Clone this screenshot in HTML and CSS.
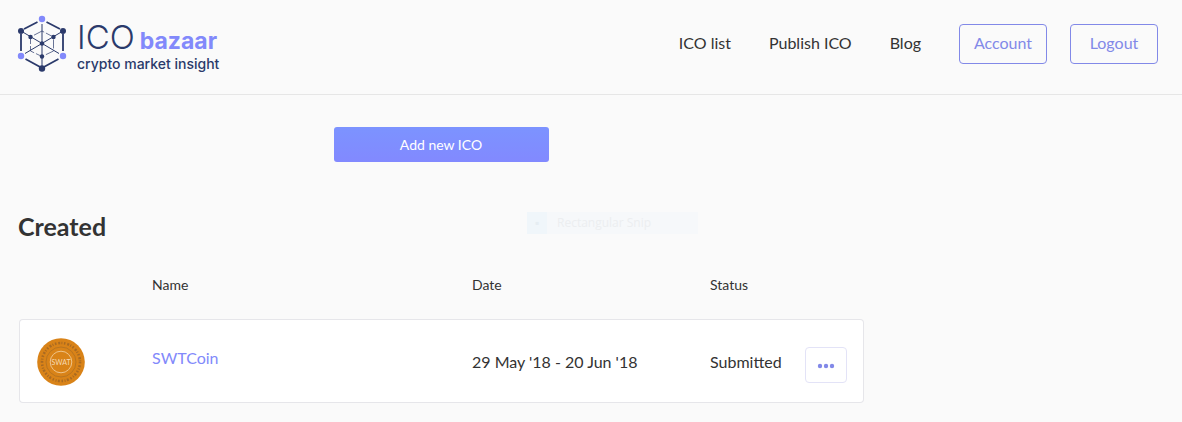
FILE: index.html
```html
<!DOCTYPE html>
<html lang="en">
<head>
<meta charset="utf-8">
<meta name="viewport" content="width=device-width, initial-scale=1">
<title>ICObazaar</title>
<link rel="stylesheet" href="styles.css">
</head>
<body>
<header class="site-header">
  <a class="logo" href="#" aria-label="ICObazaar home">
    <svg class="logo-mark" width="50" height="58" viewBox="0 0 50 58" aria-hidden="true">
      <g fill="none" stroke="#2b3a6b" stroke-width="1.8">
        <path d="M29.500 7 43 14M20.500 7 7 14M4 19v17M46 19v17M8.500 44l16.500 9 16.500-9"/>
      </g>
      <g fill="none" stroke="#2b3a6b" stroke-width="1">
        <path d="M25 9v44M4 16l38 22.500M46 16 8 38.500"/>
        <path d="M25 16 13.500 22v14L25 41.500 36.500 36V22z" stroke-opacity=".7" stroke-dasharray="9 2"/>
      </g>
      <g fill="#2b3a6b">
        <circle cx="4" cy="16" r="3"/><circle cx="46" cy="16" r="3"/><circle cx="25" cy="53.500" r="3.200"/>
        <circle cx="13.500" cy="22" r="2.200"/><circle cx="36.500" cy="22" r="2.200"/><circle cx="25" cy="28.500" r="2.200"/><circle cx="25" cy="41.500" r="2.200"/>
      </g>
      <g fill="#8289fb"><circle cx="25" cy="4" r="3.200"/><circle cx="4" cy="41" r="3.200"/><circle cx="46" cy="41" r="3.200"/></g>
    </svg>
    <span class="logo-text">
      <span class="logo-name"><span class="logo-ico">ICO</span><span class="logo-bazaar">bazaar</span></span>
      <span class="logo-tagline">crypto market insight</span>
    </span>
  </a>
  <nav class="nav">
    <a class="nav-link" href="#">ICO list</a>
    <a class="nav-link" href="#">Publish ICO</a>
    <a class="nav-link" href="#">Blog</a>
    <span class="nav-actions">
      <button class="outline-button" type="button">Account</button>
      <button class="outline-button" type="button">Logout</button>
    </span>
  </nav>
</header>
<main class="content">
  <button class="add-button" type="button">Add new ICO</button>
  <h1 class="section-title">Created</h1>
  <table class="ico-table">
    <thead>
      <tr><th class="col-logo"></th><th class="col-name">Name</th><th class="col-date">Date</th><th class="col-status">Status</th><th></th></tr>
    </thead>
    <tbody>
      <tr>
        <td class="coin-cell">
          <svg class="coin" width="48" height="48" viewBox="0 0 48 48" role="img" aria-label="SWAT coin">
            <circle cx="24" cy="24" r="23.800" fill="#d98318"/>
            <circle cx="24" cy="24" r="19" fill="none" stroke="#a96a22" stroke-width="2.600" stroke-dasharray="1.500 1.800 2 1.300 1 1.600"/>
            <circle cx="24" cy="24" r="15" fill="none" stroke="#b87420" stroke-width="1"/>
            <circle cx="24" cy="24" r="10.800" fill="none" stroke="#efc48a" stroke-width="1"/>
            <text class="coin-text" x="24" y="26.500" text-anchor="middle">SWAT</text>
          </svg>
        </td>
        <td><a class="coin-link" href="#">SWTCoin</a></td>
        <td>29 May '18 - 20 Jun '18</td>
        <td>Submitted</td>
        <td class="menu-cell">
          <button class="menu-button" type="button" aria-label="More actions">
            <svg width="18" height="6" viewBox="0 0 18 6" aria-hidden="true" fill="#8289e8"><circle cx="3" cy="3" r="2.200"/><circle cx="9" cy="3" r="2.200"/><circle cx="15" cy="3" r="2.200"/></svg>
          </button>
        </td>
      </tr>
    </tbody>
  </table>
</main>
<div class="snip-tip"><span class="snip-icon">▪</span><span>Rectangular Snip</span></div>
</body>
</html>
```
FILE: styles.css
```css
* { box-sizing: border-box; }

body {
  margin: 0;
  background: #fafafa;
  color: #333;
  font: 16px/24px Lato, sans-serif;
}

a { text-decoration: none; }

button {
  font-family: inherit;
  cursor: pointer;
}

.site-header {
  display: flex;
  align-items: flex-start;
  justify-content: space-between;
  padding: 15px 24px 21px 17px;
  border-bottom: 1px solid #e6e6e6;
}

.logo {
  display: flex;
  gap: 10px;
  color: #2b3a6b;
}

.logo-text {
  display: flex;
  flex-direction: column;
  padding-top: 6px;
}

.logo-name {
  display: flex;
  align-items: baseline;
  gap: 5px;
}

.logo-ico { font: 300 33px/32px Inter, sans-serif; }

.logo-bazaar {
  color: #8289fb;
  font: 700 23px/32px Inter, sans-serif;
}

.logo-tagline {
  font: 500 14px/14px Inter, sans-serif;
}

.nav {
  display: flex;
  align-items: center;
  gap: 38px;
  padding-top: 9px;
}

.nav-link {
  padding-bottom: 2px;
  color: #333;
}

.nav-actions {
  display: flex;
  gap: 23px;
}

.outline-button {
  width: 88px;
  height: 40px;
  padding: 0 0 4px;
  border: 1px solid #8289e8;
  border-radius: 4px;
  background: transparent;
  color: #8289e8;
  font-size: 16px;
}

.content {
  max-width: 882px;
  padding: 32px 18px 18px;
}

.add-button {
  display: block;
  width: 215px;
  height: 35px;
  margin: 0 auto;
  border: 0;
  border-radius: 3px;
  background: linear-gradient(#7c93ff, #8289ff);
  color: #fff;
  font-size: 14px;
}

.section-title {
  margin: 48px 0 27px;
  font-size: 25px;
  font-weight: 700;
  line-height: 32px;
}

.ico-table {
  width: calc(100% - 1px);
  margin-left: 1px;
  table-layout: fixed;
  border-spacing: 0;
}

.ico-table th {
  height: 50px;
  padding: 0 0 18px;
  font-size: 14px;
  font-weight: 400;
  text-align: left;
}

.col-logo { width: 133px; }
.col-name { width: 320px; }
.col-date { width: 238px; }
.col-status { width: 95px; }

.ico-table td {
  height: 84px;
  padding: 2px 0 0;
  background: #fff;
  border: solid #e6e6ea;
  border-width: 1px 0;
}

.ico-table td:first-child {
  border-left-width: 1px;
  border-radius: 4px 0 0 4px;
}

.ico-table td:last-child {
  border-right-width: 1px;
  border-radius: 0 4px 4px 0;
}

.ico-table .coin-cell { padding-left: 17px; }

.coin { display: block; }

.coin-text {
  fill: #f5dab3;
  font: 7px Lato, sans-serif;
}

.coin-link {
  display: block;
  padding-bottom: 8px;
  color: #8289fb;
}

.ico-table .menu-cell { padding-top: 8px; }

.menu-button {
  display: flex;
  align-items: center;
  justify-content: center;
  width: 42px;
  height: 36px;
  padding: 2px 0 0;
  border: 1px solid #e3e3f7;
  border-radius: 4px;
  background: #fff;
}

.snip-tip {
  position: absolute;
  top: 212px;
  left: 527px;
  display: flex;
  gap: 10px;
  width: 171px;
  background: #f6f8fa;
  color: #eceef0;
  font: 12px/22px "Open Sans", sans-serif;
}

.snip-icon {
  width: 20px;
  background: #f0f6fa;
  color: #e6edf2;
  text-align: center;
}
```
